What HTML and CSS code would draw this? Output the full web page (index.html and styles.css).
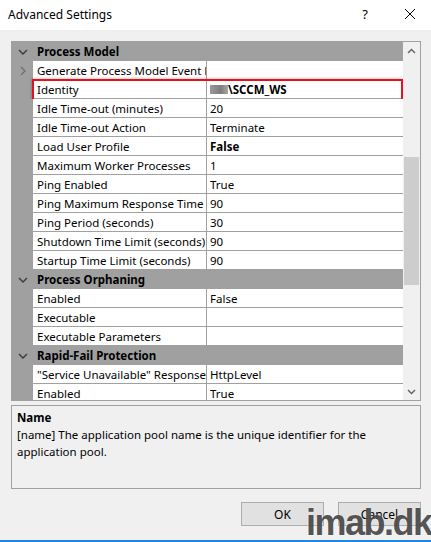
FILE: index.html
```html
<!DOCTYPE html>
<html>
<head>
<meta charset="utf-8">
<link rel="stylesheet" href="styles.css">
</head>
<body>
<div class="titlebar">
  <span class="title">Advanced Settings</span>
  <span class="help">?</span>
  <svg class="close" width="12" height="12" viewBox="0 0 12 12"><path d="M1 1 L11 11 M11 1 L1 11" stroke="#000" stroke-width="1" fill="none"/></svg>
</div>
<div class="main">
  <div class="grid">
    <div class="rows">
      <div class="cat"><span class="gut"><svg width="10" height="6" viewBox="0 0 10 6"><path d="M1 1 L5 5 L9 1" stroke="#3a3a3a" stroke-width="1.4" fill="none"/></svg></span><span class="cname">Process Model</span></div>
      <div class="row"><span class="gut"><svg width="6" height="10" viewBox="0 0 6 10"><path d="M1 1 L5 5 L1 9" stroke="#707070" stroke-width="1.4" fill="none"/></svg></span><span class="name">Generate Process Model Event Log Entry</span><span class="val"></span></div>
      <div class="row ident"><span class="gut"></span><span class="name">Identity</span><span class="val"><span class="blur"></span><b>\SCCM_WS</b></span><span class="redbox"></span></div>
      <div class="row"><span class="gut"></span><span class="name">Idle Time-out (minutes)</span><span class="val">20</span></div>
      <div class="row"><span class="gut"></span><span class="name">Idle Time-out Action</span><span class="val">Terminate</span></div>
      <div class="row"><span class="gut"></span><span class="name">Load User Profile</span><span class="val"><b>False</b></span></div>
      <div class="row"><span class="gut"></span><span class="name">Maximum Worker Processes</span><span class="val">1</span></div>
      <div class="row"><span class="gut"></span><span class="name">Ping Enabled</span><span class="val">True</span></div>
      <div class="row"><span class="gut"></span><span class="name">Ping Maximum Response Time (seconds)</span><span class="val">90</span></div>
      <div class="row"><span class="gut"></span><span class="name">Ping Period (seconds)</span><span class="val">30</span></div>
      <div class="row"><span class="gut"></span><span class="name">Shutdown Time Limit (seconds)</span><span class="val">90</span></div>
      <div class="row"><span class="gut"></span><span class="name">Startup Time Limit (seconds)</span><span class="val">90</span></div>
      <div class="cat"><span class="gut"><svg width="10" height="6" viewBox="0 0 10 6"><path d="M1 1 L5 5 L9 1" stroke="#3a3a3a" stroke-width="1.4" fill="none"/></svg></span><span class="cname">Process Orphaning</span></div>
      <div class="row"><span class="gut"></span><span class="name">Enabled</span><span class="val">False</span></div>
      <div class="row"><span class="gut"></span><span class="name">Executable</span><span class="val"></span></div>
      <div class="row"><span class="gut"></span><span class="name">Executable Parameters</span><span class="val"></span></div>
      <div class="cat"><span class="gut"><svg width="10" height="6" viewBox="0 0 10 6"><path d="M1 1 L5 5 L9 1" stroke="#3a3a3a" stroke-width="1.4" fill="none"/></svg></span><span class="cname">Rapid-Fail Protection</span></div>
      <div class="row"><span class="gut"></span><span class="name">"Service Unavailable" Response Type</span><span class="val">HttpLevel</span></div>
      <div class="row"><span class="gut"></span><span class="name">Enabled</span><span class="val">True</span></div>
    </div>
    <div class="scroll">
      <div class="arrow"><svg width="9" height="6" viewBox="0 0 9 6"><path d="M1 5 L4.5 1.5 L8 5" stroke="#606060" stroke-width="1.4" fill="none"/></svg></div>
      <div class="track"><div class="thumb"></div></div>
      <div class="arrow"><svg width="9" height="6" viewBox="0 0 9 6"><path d="M1 1 L4.5 4.5 L8 1" stroke="#606060" stroke-width="1.4" fill="none"/></svg></div>
    </div>
  </div>
  <div class="desc">
    <div class="dtitle">Name</div>
    <div class="dtext">[name] The application pool name is the unique identifier for the application pool.</div>
  </div>
  <div class="buttons">
    <button class="btn">OK</button>
    <button class="btn">Cancel</button>
  </div>
</div>
<div class="bluebar"></div>
<div class="watermark">imab.dk</div>
</body>
</html>
```
FILE: styles.css
```css
html, body {
  margin: 0;
  padding: 0;
}
body {
  width: 431px;
  height: 542px;
  background: #f0f0f0;
  font-family: "Noto Sans", "Open Sans", sans-serif;
  font-size: 11.5px;
  color: #000;
  display: flex;
  flex-direction: column;
  position: relative;
  overflow: hidden;
}
.titlebar {
  height: 30px;
  background: #fff;
  display: flex;
  align-items: center;
  padding-left: 8px;
  box-sizing: border-box;
}
.title {
  font-size: 12px;
  flex: 1;
  margin-top: -2px;
}
.help {
  font-size: 13px;
  margin-right: 36px;
  margin-top: -2px;
}
.close {
  margin-right: 15px;
  margin-top: -2px;
}
.main {
  padding: 11px 10px 0 11px;
  display: flex;
  flex-direction: column;
}
.grid {
  height: 360px;
  border: 1px solid #a0a0a0;
  display: flex;
  box-sizing: border-box;
  width: 410px;
}
.rows {
  width: 391px;
  overflow: hidden;
  background: #a0a0a0;
}
.row, .cat {
  height: 19px;
  display: flex;
  box-sizing: border-box;
  position: relative;
}
.gut {
  width: 21px;
  flex: none;
  display: flex;
  align-items: center;
  justify-content: center;
  background: #a0a0a0;
}
.cname {
  font-weight: bold;
  padding-left: 4px;
  padding-top: 1px;
  line-height: 18px;
}
.name {
  width: 174px;
  flex: none;
  background: #fff;
  border-bottom: 1px solid #a0a0a0;
  border-right: 1px solid #a0a0a0;
  padding-left: 4px;
  padding-top: 1px;
  box-sizing: border-box;
  white-space: nowrap;
  overflow: hidden;
  line-height: 17px;
}
.val {
  flex: 1;
  background: #fff;
  border-bottom: 1px solid #a0a0a0;
  padding-left: 3px;
  padding-top: 1px;
  white-space: nowrap;
  overflow: hidden;
  line-height: 17px;
  display: flex;
  align-items: center;
}
.blur {
  width: 18px;
  height: 9px;
  background: linear-gradient(90deg, #9a9a9a, #7d7d7d 60%, #a8a8a8);
  margin-top: 0px;
}
.redbox {
  position: absolute;
  left: 20px;
  top: -1px;
  width: 371px;
  height: 22px;
  border: 2px solid #e8101c;
  box-sizing: border-box;
  box-shadow: 0 0 3px rgba(0,0,0,0.35);
}
.scroll {
  width: 17px;
  background: #f0f0f0;
  display: flex;
  flex-direction: column;
}
.arrow {
  height: 17px;
  display: flex;
  align-items: center;
  justify-content: center;
}
.track {
  flex: 1;
  position: relative;
}
.thumb {
  margin: 98px 1px 0 1px;
  height: 128px;
  background: #cdcdcd;
}
.desc {
  margin-top: 4px;
  width: 410px;
  height: 84px;
  border: 1px solid #a0a0a0;
  box-sizing: border-box;
  padding: 3px 5px 2px;
  line-height: 17px;
}
.dtitle {
  font-weight: bold;
}
.buttons {
  display: flex;
  justify-content: flex-end;
  gap: 14px;
  margin-top: 13px;
}
.btn {
  width: 83px;
  height: 24px;
  background: #e1e1e1;
  border: 1px solid #adadad;
  font-family: "Noto Sans", "Open Sans", sans-serif;
  font-size: 12px;
  color: #000;
  padding: 0;
}
.bluebar {
  margin-top: auto;
  height: 2px;
  background: #1e88e5;
}
.watermark {
  position: absolute;
  left: 306px;
  top: 502px;
  font-family: "Liberation Sans", Arial, sans-serif;
  font-weight: bold;
  font-size: 36px;
  letter-spacing: -1.5px;
  color: rgba(55, 55, 55, 0.85);
  text-shadow: 0 0 2px rgba(255,255,255,0.6);
}
```
